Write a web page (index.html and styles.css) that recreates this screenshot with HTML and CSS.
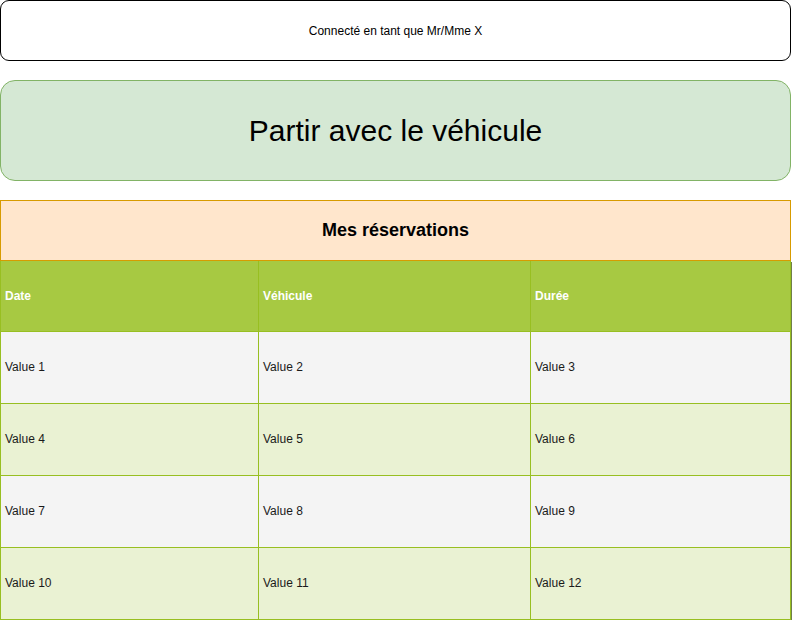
FILE: index.html
```html
<!DOCTYPE html>
<html lang="fr">
<head>
<meta charset="utf-8">
<title>Réservations</title>
<link rel="stylesheet" href="styles.css">
</head>
<body>
<div class="page">
  <div class="user-box">Connecté en tant que Mr/Mme X</div>
  <div class="depart-box">Partir avec le véhicule</div>
  <div class="resa">
    <div class="resa-title">Mes réservations</div>
    <table class="resa-table">
      <colgroup>
        <col class="c1"><col class="c2"><col class="c3">
      </colgroup>
      <thead>
        <tr><th>Date</th><th>Véhicule</th><th>Durée</th></tr>
      </thead>
      <tbody>
        <tr class="odd"><td>Value 1</td><td>Value 2</td><td>Value 3</td></tr>
        <tr class="even"><td>Value 4</td><td>Value 5</td><td>Value 6</td></tr>
        <tr class="odd"><td>Value 7</td><td>Value 8</td><td>Value 9</td></tr>
        <tr class="even"><td>Value 10</td><td>Value 11</td><td>Value 12</td></tr>
      </tbody>
    </table>
  </div>
</div>
</body>
</html>
```
FILE: styles.css
```css
* { box-sizing: border-box; }
html, body { margin: 0; padding: 0; background: #fff; }
body { font-family: "Liberation Sans", Arial, Helvetica, sans-serif; color: #000; }
.page { width: 791px; display: flex; flex-direction: column; gap: 19px; }
.user-box {
  height: 61px;
  border: 1px solid #000;
  border-radius: 9px;
  display: flex; align-items: center; justify-content: center;
  font-size: 12px;
}
.depart-box {
  height: 101px;
  background: #d5e8d4;
  border: 1px solid #82b366;
  border-radius: 15px;
  display: flex; align-items: center; justify-content: center;
  font-size: 30px;
}
.resa { display: flex; flex-direction: column; width: 791px; }
.resa-title {
  height: 61px;
  background: #ffe6cc;
  border: 1px solid #d79b00;
  display: flex; align-items: center; justify-content: center;
  font-size: 18px; font-weight: bold;
}
.resa-table {
  width: 790px;
  border-collapse: collapse;
  table-layout: fixed;
  font-size: 12px;
  box-shadow: 1px 1px 0 #6f7f4a;
}
.c1 { width: 258px; }
.c2 { width: 272px; }
.c3 { width: 260px; }
.resa-table th, .resa-table td {
  border: 1px solid #98bf21;
  text-align: left;
  padding: 0 0 0 4px;
  vertical-align: middle;
}
.resa-table th {
  height: 70px;
  background: #a7c942;
  color: #fff;
  font-weight: bold;
  border-top: none;
}
.resa-table td { height: 72px; color: #1a1a1a; }
.odd td { background: #f4f4f4; }
.even td { background: #eaf2d3; }
```
